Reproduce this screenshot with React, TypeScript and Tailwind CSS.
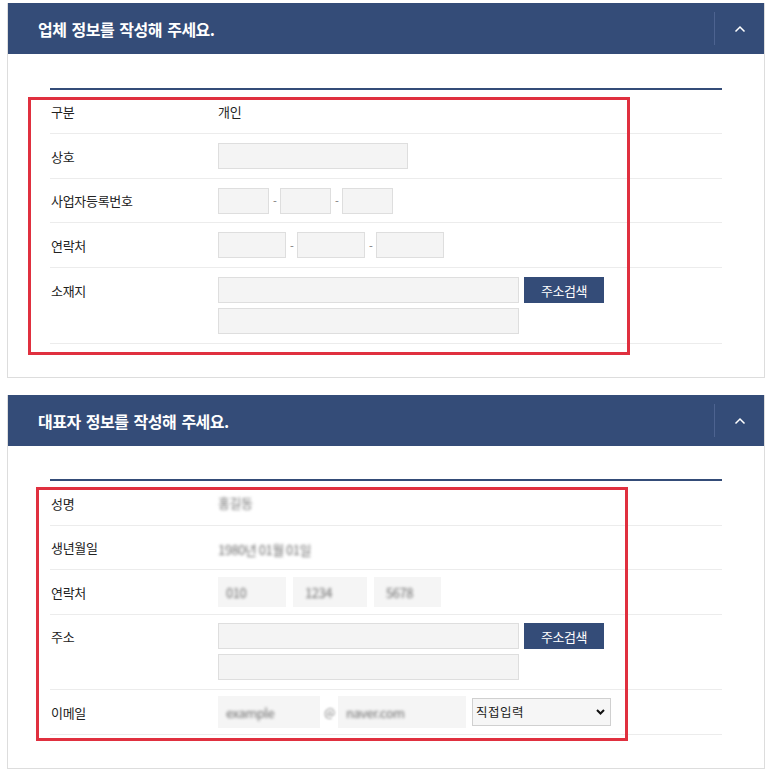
import React from "react";

const FONT = { fontFamily: '"Noto Sans CJK KR", "Noto Sans", sans-serif' };

function Header({ title }: { title: string }) {
  return (
    <div className="flex h-[51px] items-center bg-[#344c78] pl-[30px]">
      <h2 className="flex-1 text-[16px] font-bold leading-none tracking-[-0.5px] text-white [word-spacing:2px]">{title}</h2>
      <div className="flex h-[33px] w-[50px] items-center justify-center border-l border-[#4d6390]">
        <svg width="12" height="8" viewBox="0 0 12 8" fill="none">
          <polyline points="1.5,6.5 6,2 10.5,6.5" stroke="#ffffff" strokeWidth="1.5" />
        </svg>
      </div>
    </div>
  );
}

function Label({ children }: { children: React.ReactNode }) {
  return (
    <div className="flex h-[26px] w-[168px] shrink-0 items-center pl-px text-[13px] leading-none tracking-[-0.3px] text-[#222]">
      {children}
    </div>
  );
}

function Row({ h, label, children, top }: { h: string; label: string; children?: React.ReactNode; top?: string }) {
  return (
    <div className={`flex border-b border-[#ececec] ${h} ${top ? "items-start " + top : "items-center"}`}>
      <Label>{label}</Label>
      <div className="flex-1">{children}</div>
    </div>
  );
}

function Input({ w, children }: { w: string; children?: React.ReactNode }) {
  return (
    <div className={`flex h-[26px] items-center border border-[#dedede] bg-[#f4f4f4] px-[6px] ${w}`}>{children}</div>
  );
}

function Blur({ children, cls = "" }: { children: React.ReactNode; cls?: string }) {
  return <span className={`blur-[1.4px] text-[13px] leading-none tracking-[-0.5px] text-[#6f6f6f] ${cls}`}>{children}</span>;
}

function Dash() {
  return <span className="w-[3px] text-center text-[11px] leading-none text-[#777]">-</span>;
}

function AddressBlock() {
  return (
    <div className="flex flex-col gap-[5px]">
      <div className="flex gap-[5px]">
        <Input w="w-[301px]" />
        <button className="h-[26px] w-[80px] bg-[#344c78] text-[13px] leading-none tracking-[-0.5px] text-white">
          주소검색
        </button>
      </div>
      <Input w="w-[301px]" />
    </div>
  );
}

export default function App() {
  return (
    <div className="relative min-h-[776px] bg-white pt-[3px]" style={FONT}>
      {/* Panel 1 */}
      <section className="ml-[7px] w-[758px] border-x border-b border-[#dddddd] bg-white">
        <Header title="업체 정보를 작성해 주세요." />
        <div className="px-[42px] pb-[33px] pt-[34px]">
          <div className="h-[2px] bg-[#344c78]" />
          <Row h="h-[44px]" label="구분">
            <span className="relative -top-[2px] text-[13px] leading-none tracking-[-0.3px] text-[#222]">개인</span>
          </Row>
          <Row h="h-[45px]" label="상호">
            <Input w="w-[190px]" />
          </Row>
          <Row h="h-[44px]" label="사업자등록번호">
            <div className="flex items-center gap-[4px]">
              <Input w="w-[51px]" />
              <Dash />
              <Input w="w-[51px]" />
              <Dash />
              <Input w="w-[51px]" />
            </div>
          </Row>
          <Row h="h-[45px]" label="연락처">
            <div className="flex items-center gap-[4px]">
              <Input w="w-[68px]" />
              <Dash />
              <Input w="w-[68px]" />
              <Dash />
              <Input w="w-[68px]" />
            </div>
          </Row>
          <Row h="h-[76px]" label="소재지" top="pt-[9px]">
            <AddressBlock />
          </Row>
        </div>
      </section>

      {/* Panel 2 */}
      <section className="ml-[7px] mt-[17px] w-[758px] border-x border-b border-[#dddddd] bg-white">
        <Header title="대표자 정보를 작성해 주세요." />
        <div className="px-[42px] pb-[33px] pt-[33px]">
          <div className="h-[2px] bg-[#344c78]" />
          <Row h="h-[45px]" label="성명">
            <Blur cls="relative -top-[2px]">홍길동</Blur>
          </Row>
          <Row h="h-[44px]" label="생년월일">
            <Blur>1980년 01월 01일</Blur>
          </Row>
          <Row h="h-[45px]" label="연락처">
            <div className="flex items-center gap-[7px]">
              <div className="flex h-[30px] w-[68px] items-center bg-[#f5f5f5] pl-[8px]"><Blur>010</Blur></div>
              <div className="flex h-[30px] w-[74px] items-center bg-[#f5f5f5] pl-[12px]"><Blur>1234</Blur></div>
              <div className="flex h-[30px] w-[67px] items-center bg-[#f5f5f5] pl-[12px]"><Blur>5678</Blur></div>
            </div>
          </Row>
          <Row h="h-[75px]" label="주소" top="pt-[8px]">
            <AddressBlock />
          </Row>
          <Row h="h-[45px]" label="이메일">
            <div className="flex items-center">
              <div className="flex h-[32px] w-[102px] items-center bg-[#f5f5f5] pl-[8px]"><Blur>example</Blur></div>
              <span className="mx-[4px] w-[10px] blur-[1.2px] text-[12px] leading-none text-[#888]">@</span>
              <div className="flex h-[32px] w-[128px] items-center bg-[#f5f5f5] pl-[8px]"><Blur>naver.com</Blur></div>
              <div className="relative ml-[6px] h-[28px] w-[139px]">
                <select
                  defaultValue="직접입력"
                  className="h-full w-full appearance-none border border-[#d0d0d0] bg-[#f6f6f6] pl-[3px] text-[12.5px] leading-none tracking-[0.5px] text-[#222] outline-none"
                  style={FONT}
                >
                  <option>직접입력</option>
                  <option>naver.com</option>
                  <option>gmail.com</option>
                </select>
                <svg
                  className="pointer-events-none absolute right-[6px] top-[11px]"
                  width="9"
                  height="6"
                  viewBox="0 0 9 6"
                  fill="none"
                >
                  <polyline points="1,1 4.5,4.5 8,1" stroke="#111" strokeWidth="2" />
                </svg>
              </div>
            </div>
          </Row>
        </div>
      </section>

      {/* Red annotation boxes */}
      <div className="pointer-events-none absolute left-[28px] top-[97px] h-[258px] w-[602px] border-[3px] border-[#e0303f]" />
      <div className="pointer-events-none absolute left-[36px] top-[487px] h-[254px] w-[592px] border-[3px] border-[#e0303f]" />
    </div>
  );
}
